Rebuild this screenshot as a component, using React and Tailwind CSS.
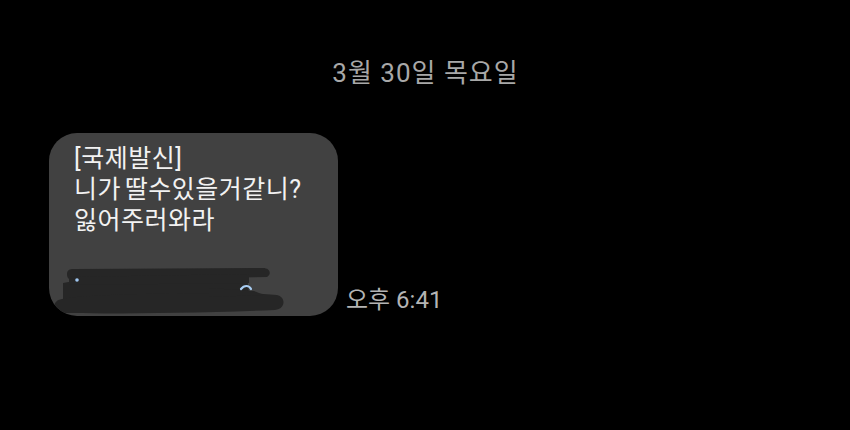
export default function App() {
  const font = { fontFamily: 'Roboto, "Noto Sans CJK KR", sans-serif' };
  return (
    <div className="w-[850px] h-[430px] bg-black flex flex-col overflow-hidden" style={font}>
      <div className="mt-[58px] text-center text-[26px] leading-[30px] tracking-[1px] text-[#a8a8a8] pl-[1px]">3월 30일 목요일</div>
      <div className="mt-[45px] pl-[49px] flex items-end">
        <div className="relative w-[289px] h-[183px] rounded-[28px] bg-[#414141] overflow-hidden pt-[10px] pl-[25px] text-[25px] leading-[31px] tracking-[0.5px] [word-spacing:-3px] text-[#f2f2f2]">
          <div>[국제발신]</div>
          <div>니가 딸수있을거같니?</div>
          <div>잃어주러와라</div>
          <svg className="absolute left-0 top-0" width="289" height="183" viewBox="0 0 289 183">
            <g fill="#262626">
              <path d="M18 141 C18 137 21 136 24 136 L214 135 C221 135 223 141 218 144 L24 147 C20 147 18 145 18 141 Z" />
              <path d="M14 150 C40 145 120 142 198 144 L200 160 L14 166 Z" />
              <path d="M20 144 L200 141 L200 150 L20 152 Z" />
              <path d="M8 168 C12 162 100 160 200 160 L228 162 C237 164 237 176 226 177 C150 180 60 181 12 180 C4 179 3 172 8 168 Z" />
              <path d="M160 155 L205 158 L215 162 L160 164 Z" />
            </g>
            <circle cx="28" cy="147" r="1.8" fill="#9fc6f0" />
            <path d="M192 156 C195 152 200 152 202 156" stroke="#a8cdf2" strokeWidth="2.2" fill="none" strokeLinecap="round" />
          </svg>
        </div>
        <div className="ml-[8px] mb-[4px] text-[24px] leading-[24px] text-[#b4b4b4]">오후 6:41</div>
      </div>
    </div>
  );
}
